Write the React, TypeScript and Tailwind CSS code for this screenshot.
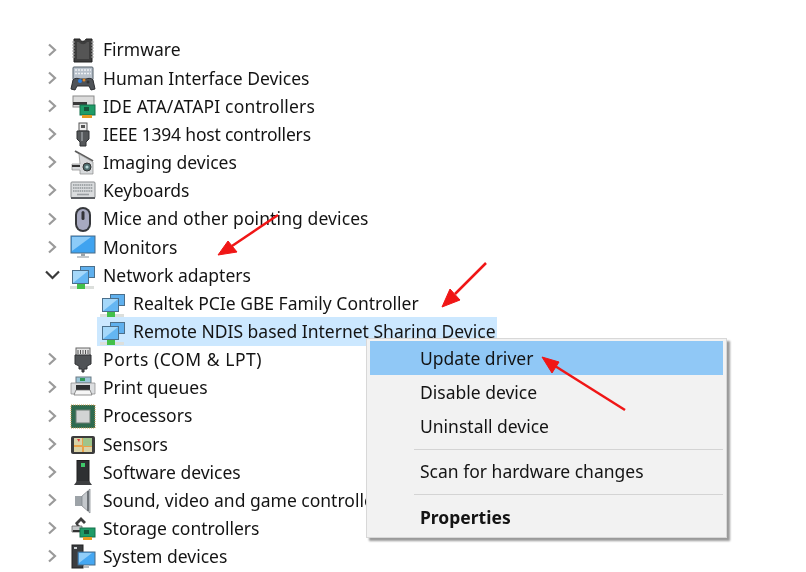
import React from "react";

const Net = () => (
  <svg width="26" height="26" viewBox="0 0 26 26" className="overflow-visible">
    <rect x="10.500" y="3.500" width="14" height="11" fill="#5fb0ee" stroke="#4c6f8a" strokeWidth="1" />
    <rect x="2.500" y="7.500" width="16" height="13" fill="#64b6f2" stroke="#4c6f8a" strokeWidth="1" />
    <path d="M3 8h15L3 20z" fill="#a5d8fa" />
    <rect x="0" y="23" width="24" height="3" fill="#dcdfdc" />
    <rect x="7" y="21" width="8" height="5" fill="#43c04a" />
  </svg>
);

const icons: Record<string, React.ReactNode> = {
  firmware: (
    <svg width="26" height="26" viewBox="0 0 26 26">
      <path d="M4 1h6c0 3 5 3 6 0h6v23H4z" fill="#3d3d3d" stroke="#222" />
      <path d="M7 4h2c2 3 6 3 8 0h2v17H7z" fill="#555" />
      <path d="M2 4h3M2 7h3M2 10h3M2 13h3M2 16h3M2 19h3M21 4h3M21 7h3M21 10h3M21 13h3M21 16h3M21 19h3" stroke="#a5a5a5" strokeWidth="1" />
    </svg>
  ),
  hid: (
    <svg width="26" height="26" viewBox="0 0 26 26">
      <rect x="3" y="1" width="20" height="13" rx="1" fill="#b9c2cc" stroke="#55606a" />
      <path d="M5 4h16M5 7.500h16" stroke="#eef1f4" strokeWidth="1.500" strokeDasharray="2 1" />
      <path d="M1 23l2-9c1-2 5-2 7-1h6c2-1 6-1 7 1l2 9-4 1-2-4H7l-2 4z" fill="#4f5358" stroke="#2c2e31" />
      <circle cx="10" cy="15" r="2" fill="#2d7fe0" />
      <circle cx="14" cy="14" r="1.500" fill="#e08a2c" />
      <circle cx="18" cy="16" r="1.500" fill="#333" />
    </svg>
  ),
  ide: (
    <svg width="26" height="26" viewBox="0 0 26 26">
      <rect x="3" y="2" width="21" height="11" fill="#dcdcdc" stroke="#8a8a8a" />
      <rect x="3" y="8" width="14" height="3" fill="#3a3a3a" />
      <rect x="10" y="11" width="15" height="10" fill="#1f9c68" stroke="#14704a" />
      <rect x="14" y="13" width="5" height="4" fill="#17543a" />
      <rect x="12" y="21" width="10" height="3" fill="#e59a22" />
    </svg>
  ),
  ieee: (
    <svg width="26" height="26" viewBox="0 0 26 26">
      <rect x="9" y="1" width="8" height="8" fill="#eee" stroke="#555" />
      <rect x="11" y="3" width="4" height="3" fill="#555" />
      <path d="M7 9h12v8l-3 3v4h-6v-4l-3-3z" fill="#55585a" stroke="#2f3133" />
      <path d="M11 10h2v9h-2z" fill="#85898c" />
    </svg>
  ),
  imaging: (
    <svg width="26" height="26" viewBox="0 0 26 26">
      <path d="M5 1l18 10" stroke="#5b5b5b" strokeWidth="2" />
      <path d="M9 4l14 8v12H10v-4H2v-6h8z" fill="#d8dadc" stroke="#8a8a8a" strokeWidth=".7" />
      <rect x="2" y="15" width="8" height="2" fill="#333" />
      <circle cx="17" cy="17" r="4" fill="#4e6e70" stroke="#333" />
      <circle cx="17" cy="17" r="1.600" fill="#b5d5d6" />
    </svg>
  ),
  keyboard: (
    <svg width="26" height="26" viewBox="0 0 26 26">
      <rect x="1" y="4" width="24" height="16" rx="1" fill="#dadcde" stroke="#8a8d90" />
      <path d="M3 7h20M3 10h20M3 13h20" stroke="#8f9498" strokeWidth="1.600" strokeDasharray="1.500 .7" />
      <path d="M7 16.500h12" stroke="#9a9ea2" strokeWidth="1.600" />
      <rect x="1" y="19" width="24" height="2" fill="#5c5f63" />
    </svg>
  ),
  mouse: (
    <svg width="26" height="26" viewBox="0 0 26 26">
      <rect x="5" y="0" width="16" height="25" rx="8" fill="#36383c" />
      <rect x="7" y="2" width="12" height="21" rx="6" fill="#a7a9c0" />
      <rect x="11.500" y="4" width="3" height="9" rx="1.500" fill="#333338" />
    </svg>
  ),
  monitor: (
    <svg width="26" height="26" viewBox="0 0 26 26">
      <rect x="1" y="1" width="24" height="17" fill="#3fa3f0" stroke="#4a6a85" />
      <path d="M2 2h19L2 16z" fill="#8ccbf8" />
      <rect x="11" y="18" width="4" height="3" fill="#9aa3aa" />
      <rect x="7" y="21" width="12" height="2" fill="#c3c8cc" />
    </svg>
  ),
  net: <Net />,
  ports: (
    <svg width="26" height="26" viewBox="0 0 26 26">
      <rect x="6" y="1" width="14" height="8" fill="#e5e5e5" stroke="#666" />
      <path d="M8 3v4M10.500 3v4M13 3v4M15.500 3v4M18 3v4" stroke="#555" />
      <path d="M5 8h16v9l-4 2v3h-3v3h-2v-3H9v-3l-4-2z" fill="#505356" stroke="#2f3133" />
    </svg>
  ),
  print: (
    <svg width="26" height="26" viewBox="0 0 26 26">
      <rect x="6" y="2" width="15" height="6" fill="#9cc6d8" stroke="#6a7a84" />
      <rect x="10" y="3" width="5" height="3" fill="#2f9a57" />
      <path d="M1 8h24v11H1z" fill="#dcdee0" stroke="#888" strokeWidth=".7" />
      <rect x="6" y="10" width="14" height="5" fill="#2e3032" />
      <path d="M6 15h14l2 5H4z" fill="#f6f6f6" stroke="#666" strokeWidth=".7" />
    </svg>
  ),
  cpu: (
    <svg width="26" height="26" viewBox="0 0 26 26">
      <rect x="1" y="1" width="24" height="23" fill="#2f6a4f" stroke="#c89a50" strokeDasharray="1 1" />
      <rect x="2" y="2" width="22" height="21" fill="#2f6a4f" />
      <rect x="6" y="6" width="14" height="13" fill="#d2d4d4" stroke="#6d7d75" />
    </svg>
  ),
  sensor: (
    <svg width="26" height="26" viewBox="0 0 26 26">
      <rect x="1" y="4" width="24" height="18" rx="2" fill="#3c3c3c" />
      <rect x="4" y="6" width="18" height="14" fill="#d9d3a8" />
      <path d="M4 14h18M13 6v14" stroke="#e9a24a" strokeWidth="2" />
      <rect x="13" y="6" width="9" height="8" fill="#9ec58b" />
      <path d="M7 7l2 3 1-3z" fill="#e23b3b" />
    </svg>
  ),
  software: (
    <svg width="26" height="26" viewBox="0 0 26 26">
      <rect x="7" y="0.500" width="12" height="21" fill="#2e3032" stroke="#1e1e1e" />
      <rect x="11" y="3" width="4" height="4" fill="#3fc96a" />
      <path d="M4 25l3-4h12l3 4z" fill="#3c3e40" />
    </svg>
  ),
  sound: (
    <svg width="26" height="26" viewBox="0 0 26 26">
      <rect x="5" y="8" width="7" height="10" fill="#9da3a8" />
      <path d="M12 8l8-7v24l-8-7z" fill="#c4c8cc" stroke="#7c8186" strokeWidth=".7" />
      <path d="M18 3v20" stroke="#6d7277" strokeWidth="2" />
    </svg>
  ),
  storage: (
    <svg width="26" height="26" viewBox="0 0 26 26">
      <path d="M5 7l6-6 5 5-2 2-3-3-3 3 2 2-2 2z" fill="#3d3d3d" />
      <path d="M2 10h10v6H2z" fill="#c6c8ca" stroke="#555" strokeWidth=".7" />
      <rect x="3" y="14" width="10" height="2" fill="#333" />
      <rect x="10" y="12" width="15" height="9" fill="#1f9c68" stroke="#14704a" />
      <rect x="14" y="14" width="5" height="4" fill="#17543a" />
      <rect x="13" y="21" width="9" height="3" fill="#e59a22" />
    </svg>
  ),
  system: (
    <svg width="26" height="26" viewBox="0 0 26 26">
      <rect x="2" y="1" width="11" height="23" fill="#3b3d40" stroke="#222" />
      <rect x="4" y="3" width="3" height="2" fill="#cfd3d6" />
      <rect x="8" y="8" width="17" height="13" fill="#45a7f2" stroke="#4a6a85" />
      <path d="M9 9h13L9 19z" fill="#90cdf8" />
      <rect x="14" y="21" width="5" height="3" fill="#b8bcc0" />
    </svg>
  ),
};

type Item = { label: string; icon: string; track?: string };

const before: Item[] = [
  { label: "Firmware", icon: "firmware" },
  { label: "Human Interface Devices", icon: "hid" },
  { label: "IDE ATA/ATAPI controllers", icon: "ide", track: "tracking-[0.16px]" },
  { label: "IEEE 1394 host controllers", icon: "ieee", track: "tracking-[-0.2px]" },
  { label: "Imaging devices", icon: "imaging" },
  { label: "Keyboards", icon: "keyboard" },
  { label: "Mice and other pointing devices", icon: "mouse", track: "tracking-[0.1px]" },
  { label: "Monitors", icon: "monitor" },
];

const after: Item[] = [
  { label: "Ports (COM & LPT)", icon: "ports", track: "tracking-[0.55px]" },
  { label: "Print queues", icon: "print" },
  { label: "Processors", icon: "cpu" },
  { label: "Sensors", icon: "sensor" },
  { label: "Software devices", icon: "software" },
  { label: "Sound, video and game controllers", icon: "sound" },
  { label: "Storage controllers", icon: "storage" },
  { label: "System devices", icon: "system" },
];

const Chevron = ({ open }: { open?: boolean }) => (
  <svg width="16" height="14" viewBox="0 0 16 14" fill="none" stroke={open ? "#3a3a3a" : "#9a9a9a"} strokeWidth="2.200">
    {open ? <path d="M1 3.500l6.500 6.500 6.500-6.500" /> : <path d="M4 1.500l6 5.500-6 5.500" />}
  </svg>
);

const Row = ({ item, open }: { item: Item; open?: boolean }) => (
  <div className="flex h-[28.16px] items-center pl-[45px]">
    <span className="flex w-[25px] justify-start">
      <Chevron open={open} />
    </span>
    <span className="mt-[2px] flex w-[26px] justify-center">{icons[item.icon]}</span>
    <span className={`ml-[7px] whitespace-nowrap ${item.track ?? ""}`}>{item.label}</span>
  </div>
);

const Child = ({ label, selected }: { label: string; selected?: boolean }) => (
  <div className="flex h-[28.16px] items-center pl-[97px]">
    <div className={`flex h-[29px] w-[400px] items-center pl-[3px] ${selected ? "bg-[#cce8ff]" : ""}`}>
      <span className="mt-[2px] flex w-[26px] justify-center">{icons.net}</span>
      <span className="ml-[7px] whitespace-nowrap">{label}</span>
    </div>
  </div>
);

const MenuItem = ({ label, active, bold }: { label: string; active?: boolean; bold?: boolean }) => (
  <div className={`flex h-[34px] items-center pl-[50px] ${active ? "bg-[#90c8f6]" : ""} ${bold ? "font-bold" : ""}`}>
    {label}
  </div>
);

export default function App() {
  return (
    <div
      className="relative h-[572px] w-[806px] overflow-hidden bg-white pt-[35.5px] text-[17.5px] text-[#141414] blur-[0.6px]"
      style={{ fontFamily: '"Noto Sans", "Open Sans", sans-serif' }}
    >
      {before.map((i) => (
        <Row key={i.label} item={i} />
      ))}
      <Row item={{ label: "Network adapters", icon: "net" }} open />
      <Child label="Realtek PCIe GBE Family Controller" />
      <Child label="Remote NDIS based Internet Sharing Device" selected />
      {after.map((i) => (
        <Row key={i.label} item={i} />
      ))}

      <div className="absolute left-[366px] top-[338px] w-[361px] border border-[#d8d8d8] bg-[#f2f2f2] px-[3px] pb-[3px] pt-[2px] shadow-[3px_3px_2px_#9a9a9a]">
        <MenuItem label="Update driver" active />
        <MenuItem label="Disable device" />
        <MenuItem label="Uninstall device" />
        <div className="mb-[4px] ml-[44px] mt-[6px] h-px bg-[#d4d4d4]" />
        <MenuItem label="Scan for hardware changes" />
        <div className="mb-[5px] ml-[44px] mt-[6px] h-px bg-[#d4d4d4]" />
        <MenuItem label="Properties" bold />
      </div>

      <svg className="absolute left-0 top-0" width="806" height="572" viewBox="0 0 806 572" fill="#f01616" stroke="#f01616">
        <path d="M278 215L232 246" strokeWidth="2.500" />
        <path d="M218 255L228 241L237 252z" />
        <path d="M486 263L455 294" strokeWidth="2.500" />
        <path d="M442 307L450 289L460 300z" />
        <path d="M625 410L555 366" strokeWidth="2.500" />
        <path d="M542 357L559 362L552 373z" />
      </svg>
    </div>
  );
}
